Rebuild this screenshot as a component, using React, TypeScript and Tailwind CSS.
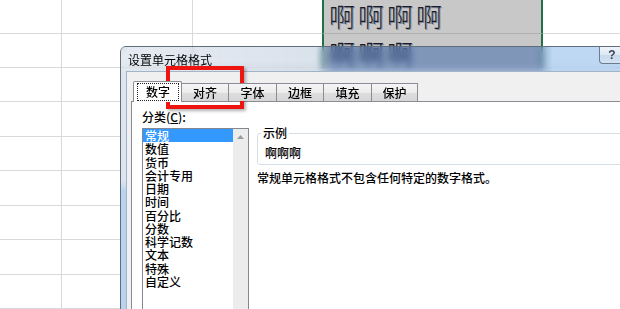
import React from "react";

const CJK = "font-['Noto_Sans_CJK_SC','Noto_Sans',sans-serif]";

const rowHeights = ["h-[34px]", "h-[34px]", "h-[34px]", "h-[35px]", "h-[34px]", "h-[35px]", "h-[34px]", "h-[35px]", "h-[34px]"];

const categories = ["常规", "数值", "货币", "会计专用", "日期", "时间", "百分比", "分数", "科学记数", "文本", "特殊", "自定义"];

const tabs = [
  { label: "对齐", w: "w-[47px]" },
  { label: "字体", w: "w-[48px]" },
  { label: "边框", w: "w-[47px]" },
  { label: "填充", w: "w-[48px]" },
  { label: "保护", w: "w-[46px]" },
];

function Sheet() {
  return (
    <div className="flex flex-col">
      {rowHeights.map((h, i) => {
        const sel = i < 2;
        return (
          <div key={i} className={`flex ${h}`}>
            <div className="w-[62px] border-r border-b border-[#d9d9d9]" />
            <div className="w-[131px] border-r border-b border-[#d9d9d9]" />
            <div className="w-[129px] border-b border-[#d9d9d9]" />
            {sel ? (
              <div
                className={`w-[221px] bg-[#c8c8c8] border-x-2 border-x-[#217346] border-b border-b-[#b0b0b0] ${
                  i === 0 ? "pt-[2px]" : "pt-[5px]"
                } pl-[5px]`}
              >
                <div
                  className={`${CJK} text-[26px] leading-[28px] tracking-[3px] font-light text-[#1c1c28] whitespace-nowrap [text-shadow:1px_1px_0_rgba(70,90,130,0.55)]`}
                >
                  {i === 0 ? "啊啊啊啊" : "啊啊啊"}
                </div>
              </div>
            ) : (
              <div className="w-[221px] border-b border-[#d9d9d9]" />
            )}
            <div className="flex-1 border-b border-[#d9d9d9]" />
          </div>
        );
      })}
    </div>
  );
}

function Dialog() {
  return (
    <div className="absolute left-[120px] top-[46px] w-[555px] h-[290px] rounded-t-[6px] border border-[#5f6d7d] overflow-hidden flex flex-col">
      {/* title bar */}
      <div className="h-[24px] shrink-0 flex items-start backdrop-blur-[3px] bg-[linear-gradient(90deg,rgba(70,110,160,0.14)_0px,rgba(70,110,160,0.2)_195px,rgba(55,100,170,0.5)_212px,rgba(55,100,170,0.5)_418px,rgba(100,160,225,0.42)_432px,rgba(100,160,225,0.42)_100%)]">
        <span className={`${CJK} pt-[6px] pl-[7px] text-[12px] leading-[14px] text-black`}>设置单元格格式</span>
        <div className="flex-1" />
        <div className="w-[26px] h-[17px] rounded-bl-[4px] border border-t-0 border-[#6c7c8e] bg-[linear-gradient(180deg,#eef4fa_0%,#dde8f4_50%,#c8d9ec_51%,#d3e3f3_100%)] flex items-center justify-center font-['Liberation_Sans',sans-serif] text-[12px] font-bold text-[#3a4656]">
          ?
        </div>
        <div className="w-[43px] h-[17px] mr-[6px] rounded-br-[4px] border border-t-0 border-l-0 border-[#6c7c8e] bg-[linear-gradient(180deg,#e8a493_0%,#d4694e_50%,#c1442a_51%,#d7765a_100%)] flex items-center justify-center text-white text-[11px] font-bold">
          ✕
        </div>
      </div>
      {/* body */}
      <div className="flex flex-1 min-h-0">
        <div className="w-[5px] shrink-0 bg-[linear-gradient(180deg,#dde5ee_0px,#dde5ee_110px,#b9d3ee_120px,#b9d3ee_100%)]" />
        <div className={`${CJK} flex-1 border border-[#a3b4c6] bg-[#f0f0f0] flex flex-col text-[12px] leading-[14px] font-medium text-black`}>
          {/* tabs */}
          <div className="flex items-end ml-[4px] pl-[2px] pt-[9px] relative z-10 -mb-px">
            <div className="w-[49px] h-[21px] border border-b-0 border-[#898c95] bg-white rounded-t-[2px] pt-[1px] pl-[3px]">
              <div className="w-[42px] h-[18px] border border-dotted border-[#222] flex items-center justify-center">数字</div>
            </div>
            {tabs.map((t) => (
              <div
                key={t.label}
                className={`${t.w} h-[18px] mb-[1px] border-t border-r border-[#898c95] bg-[linear-gradient(180deg,#f5f5f5_0%,#ececec_50%,#dedede_51%,#d6d6d6_100%)] flex items-center justify-center`}
              >
                {t.label}
              </div>
            ))}
          </div>
          {/* panel */}
          <div className="ml-[4px] flex-1 border border-[#898c95] bg-white flex">
            <div className="pl-[10px] pt-[8px] flex flex-col">
              <div>
                分类(<span className="underline underline-offset-1">C</span>):
              </div>
              <div className="mt-[4px] w-[107px] h-[200px] border border-[#828790] bg-white flex">
                <div className="w-[90px] flex flex-col">
                  {categories.map((c, i) => (
                    <div
                      key={c}
                      className={`h-[13.27px] leading-[13px] pl-[2px] whitespace-nowrap ${i === 0 ? "bg-[#3399ff] text-white" : ""}`}
                    >
                      {c}
                    </div>
                  ))}
                </div>
                <div className="w-[15px] bg-[#ececec] flex flex-col items-center pt-[6px]">
                  <svg width="7" height="4" viewBox="0 0 7 4">
                    <path d="M0 4 L3.5 0 L7 4 Z" fill="#9a9a9a" />
                  </svg>
                </div>
              </div>
            </div>
            <div className="ml-[8px] flex-1 flex flex-col">
              <fieldset className="mt-[24px] border border-[#d5dfe5] rounded-[3px] px-[3px] pb-[4px]">
                <legend className="px-[2px] leading-[14px]">示例</legend>
                <div className="mt-[6px] pl-[4px] leading-[14px]">啊啊啊</div>
              </fieldset>
              <div className="mt-[6px] leading-[14px]">常规单元格格式不包含任何特定的数字格式。</div>
            </div>
          </div>
        </div>
      </div>
    </div>
  );
}

export default function App() {
  return (
    <div className="relative w-[620px] h-[309px] overflow-hidden bg-white">
      <Sheet />
      <Dialog />
      <div className="absolute left-[166px] top-[66px] w-[78px] h-[43px] border-4 border-[#ee1410] shadow-[2px_2px_3px_rgba(0,0,0,0.3)]" />
    </div>
  );
}
